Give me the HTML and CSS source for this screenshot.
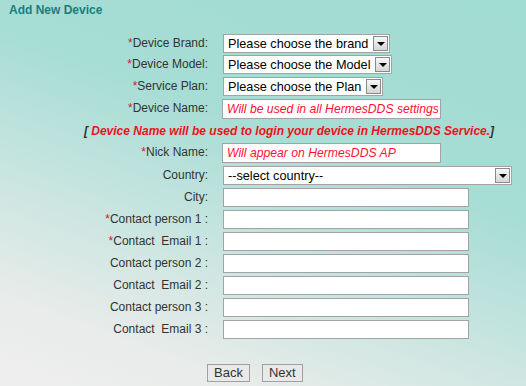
FILE: index.html
```html
<!DOCTYPE html>
<html>
<head>
<meta charset="utf-8">
<link rel="stylesheet" href="styles.css">
</head>
<body>
<div class="page">
  <h1 class="title">Add New Device</h1>
  <form class="form">
    <label class="lbl"><span class="req">*</span>Device Brand:</label>
    <div class="ctl"><div class="sel"><span class="sel-text">Please choose the brand</span><span class="arrow"></span></div></div>

    <label class="lbl"><span class="req">*</span>Device Model:</label>
    <div class="ctl"><div class="sel"><span class="sel-text">Please choose the Model</span><span class="arrow"></span></div></div>

    <label class="lbl"><span class="req">*</span>Service Plan:</label>
    <div class="ctl"><div class="sel"><span class="sel-text">Please choose the Plan</span><span class="arrow"></span></div></div>

    <label class="lbl"><span class="req">*</span>Device Name:</label>
    <div class="ctl"><input class="inp inp-hint" type="text" value="Will be used in all HermesDDS settings"></div>

    <div class="notice"><span class="br">[</span> Device Name will be used to login your device in HermesDDS Service.<span class="br">]</span></div>

    <label class="lbl"><span class="req">*</span>Nick Name:</label>
    <div class="ctl"><input class="inp inp-hint" type="text" value="Will appear on HermesDDS AP"></div>

    <label class="lbl">Country:</label>
    <div class="ctl"><div class="sel sel-wide"><span class="sel-text">--select country--</span><span class="arrow"></span></div></div>

    <label class="lbl">City:</label>
    <div class="ctl"><input class="inp" type="text"></div>

    <label class="lbl"><span class="req">*</span>Contact person 1 :</label>
    <div class="ctl"><input class="inp" type="text"></div>

    <label class="lbl"><span class="req">*</span>Contact&nbsp; Email 1 :</label>
    <div class="ctl"><input class="inp" type="text"></div>

    <label class="lbl">Contact person 2 :</label>
    <div class="ctl"><input class="inp" type="text"></div>

    <label class="lbl">Contact&nbsp; Email 2 :</label>
    <div class="ctl"><input class="inp" type="text"></div>

    <label class="lbl">Contact person 3 :</label>
    <div class="ctl"><input class="inp" type="text"></div>

    <label class="lbl">Contact&nbsp; Email 3 :</label>
    <div class="ctl"><input class="inp" type="text"></div>
  </form>
  <div class="buttons">
    <button class="btn" type="button">Back</button>
    <button class="btn" type="button">Next</button>
  </div>
</div>
</body>
</html>
```

FILE: styles.css
```css
html, body {
  margin: 0;
  padding: 0;
  height: 100%;
}
body {
  background: linear-gradient(200deg, #a1dcd2 0%, #a6ddd5 38%, #e9ecea 85%, #eeeeee 100%);
  font-family: "Liberation Sans", Arial, sans-serif;
  font-size: 12px;
  color: #333;
  overflow: hidden;
}
.page {
  padding: 3px 0 0 9px;
}
.title {
  margin: 0;
  font-size: 12px;
  font-weight: bold;
  color: #1a7d7f;
  line-height: 14px;
}
.form {
  margin: 17px 0 0 57px;
  width: 446px;
  display: grid;
  grid-template-columns: 142px 289px;
  column-gap: 15px;
  grid-template-rows: 21px 22px 22px 22px 22px 23px 22px 22px 22px 22px 22px 22px 22px 22px;
  align-items: start;
}
.lbl {
  text-align: right;
  white-space: nowrap;
  line-height: 19px;
  color: #333;
}
.req {
  color: #dd1133;
}
.ctl {
  display: flex;
}
.sel {
  display: inline-flex;
  align-items: center;
  height: 19px;
  box-sizing: border-box;
  border: 1px solid #a3a3a3;
  background: #fff;
  font-size: 12.7px;
  color: #000;
}
.sel-text {
  padding: 0 5px 0 4px;
  white-space: nowrap;
}
.sel-wide {
  width: 289px;
  justify-content: space-between;
}
.arrow {
  position: relative;
  width: 15px;
  height: 15px;
  margin-right: 1px;
  box-sizing: border-box;
  border: 1px solid #8a8a8a;
  background: linear-gradient(#f7f7f7, #d6d6d6);
}
.arrow::after {
  content: "";
  position: absolute;
  left: 3px;
  top: 5px;
  border-left: 4px solid transparent;
  border-right: 4px solid transparent;
  border-top: 4px solid #000;
}
.inp {
  width: 246px;
  height: 19px;
  box-sizing: border-box;
  border: 1px solid #a3a3a3;
  background: #fff;
  margin: 0;
  padding: 0 4px;
  font-family: "Liberation Sans", Arial, sans-serif;
  font-size: 13px;
}
.inp-hint {
  width: 219px;
  height: 20px;
  font-size: 12.2px;
  font-style: italic;
  color: #ff1133;
  margin-left: -1px;
  padding: 0 2px 0 4px;
}
.notice {
  grid-column: 1 / span 2;
  text-align: center;
  font-weight: bold;
  font-style: italic;
  color: #ee1122;
  line-height: 20px;
  white-space: nowrap;
}
.br {
  color: #333;
}
.buttons {
  margin: 22px 0 0 198px;
  display: flex;
  gap: 12px;
}
.btn {
  height: 18px;
  box-sizing: border-box;
  padding: 0 6px;
  border: 1px solid #a0a0a0;
  background: #e9e9e9;
  font-family: "Liberation Sans", Arial, sans-serif;
  font-size: 13px;
  color: #333;
  line-height: 16px;
}
```
